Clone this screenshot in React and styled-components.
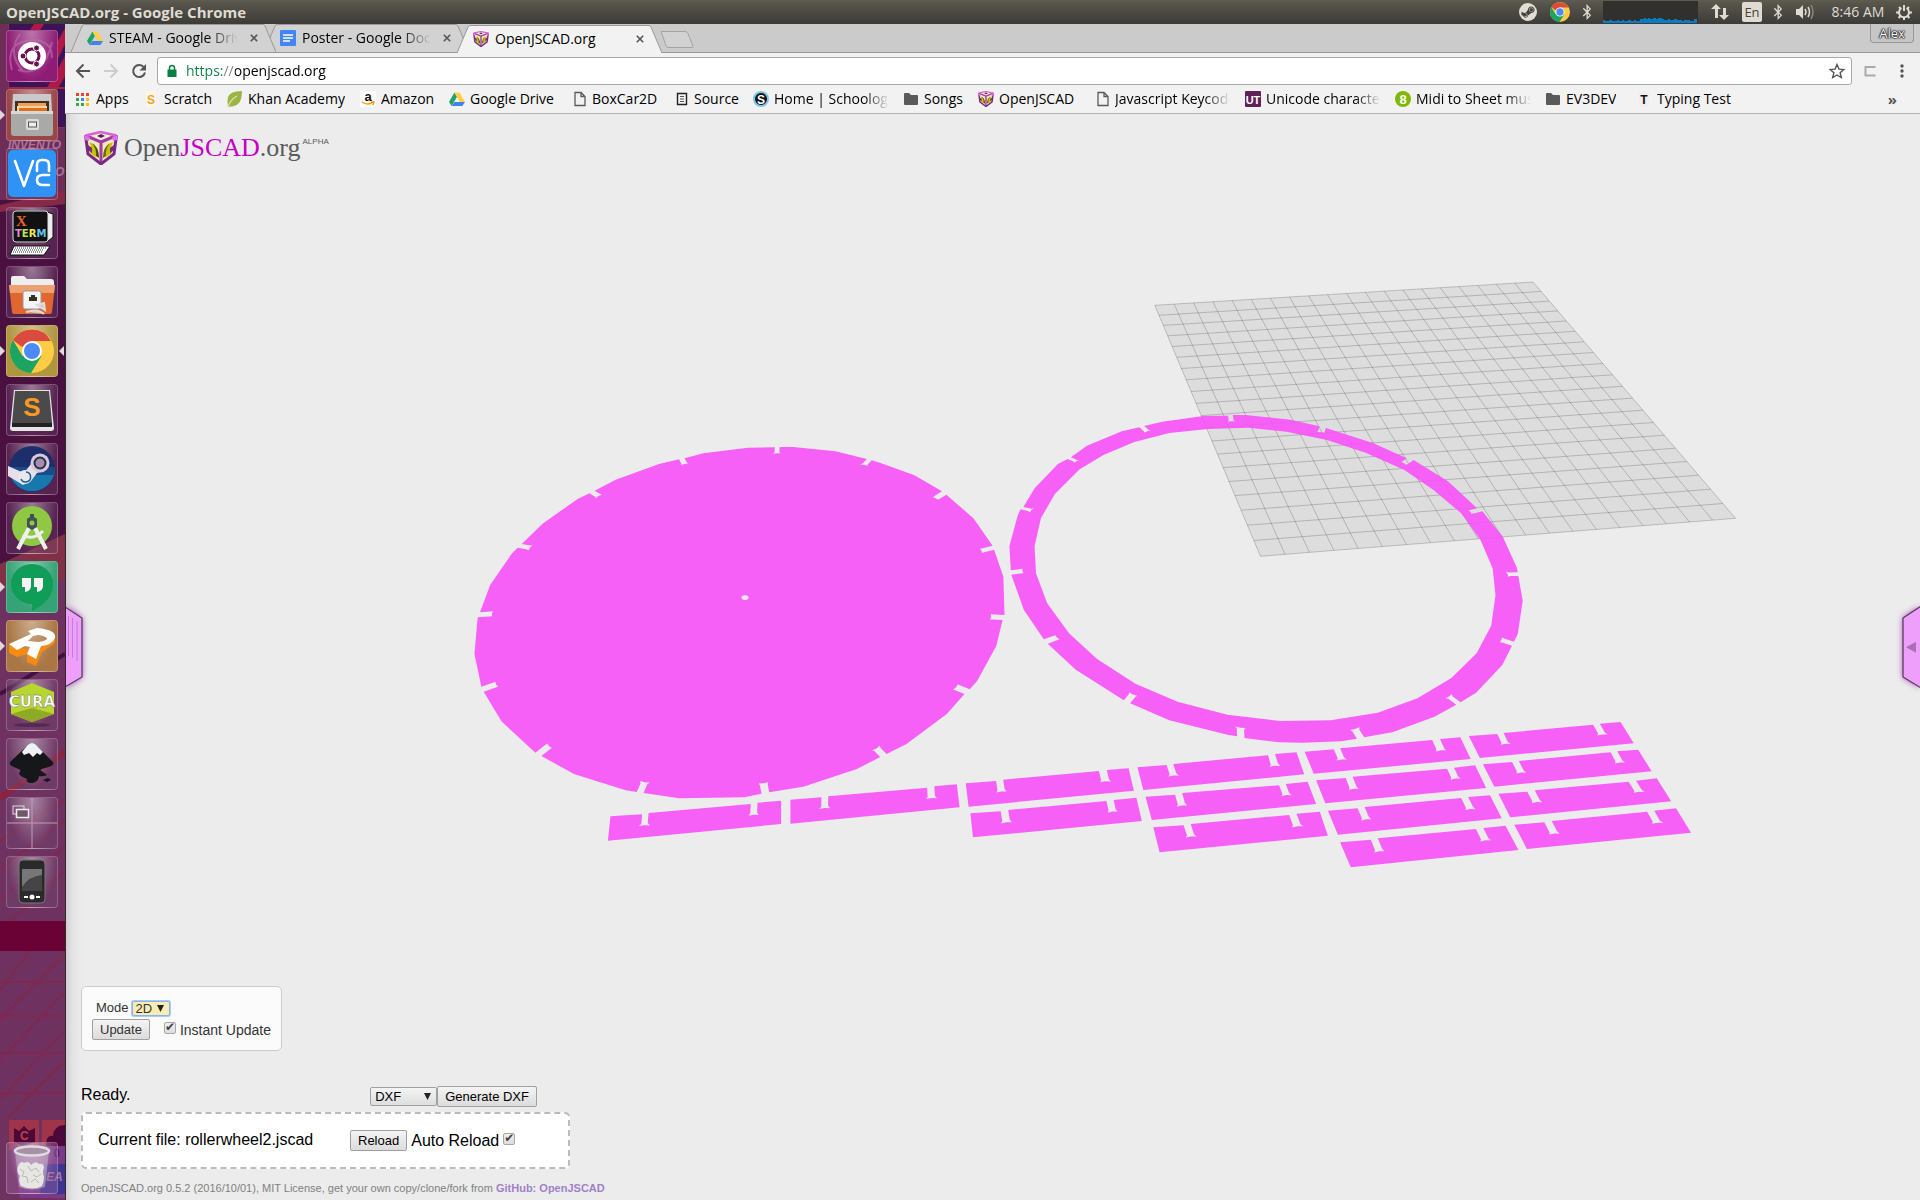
import React from "react";
import styled, { createGlobalStyle, css } from "styled-components";
import { FaBluetoothB, FaSteamSymbol } from "react-icons/fa";

const uiFont = `"Open Sans", "Noto Sans", sans-serif`;
const pageFont = `"Liberation Sans", Arial, sans-serif`;

const GlobalStyle = createGlobalStyle`
  *, *::before, *::after { box-sizing: border-box; }
  html, body, #root { height: 100%; }
  body { margin: 0; overflow: hidden; background: #ececec; font-family: ${pageFont}; }
  svg { display: block; }
  button, select, input { font: inherit; color: inherit; margin: 0; }
`;

/* ---------- Desktop frame ---------- */

const Desktop = styled.div`
  display: flex;
  flex-direction: column;
  min-height: 100vh;
`;

const MenuBar = styled.header`
  display: flex;
  align-items: center;
  justify-content: space-between;
  height: 24px;
  padding: 0 8px 0 6px;
  background: linear-gradient(#5f5c4f 0, #58554c 3px, #3c3b37 100%);
  color: #dfdbd2;
  font: 14px/24px ${uiFont};
`;

const WindowTitle = styled.h1`
  margin: 0;
  font-size: 15px;
  font-weight: 700;
  line-height: 22px;
`;

const Indicators = styled.div`
  display: flex;
  align-items: center;
  line-height: 22px;
`;

const Indicator = styled.span`
  display: flex;
  align-items: center;
  justify-content: center;
  width: ${(p) => p.$w}px;
  height: 24px;
`;

const Keyboard = styled.span`
  width: 20px;
  height: 20px;
  border-radius: 2px;
  background: #dfdbd2;
  color: #45433d;
  font-size: 13px;
  line-height: 20px;
  text-align: center;
`;

const Work = styled.div`
  display: flex;
  flex: 1;
`;

/* ---------- Launcher ---------- */

const LauncherFrame = styled.nav`
  display: grid;
  flex: none;
  width: 65px;
  background: #6e3160;
  overflow: hidden;
  > * { grid-area: 1 / 1; }
`;

const Wallpaper = styled.svg`
  width: 65px;
  height: 100%;
`;

const LauncherItems = styled.div`
  position: relative;
  display: flex;
  flex-direction: column;
  gap: 7px;
  padding: 6px;
`;

const Tile = styled.button`
  position: relative;
  display: grid;
  place-items: center;
  width: 52px;
  height: 52px;
  padding: 0;
  border: 1px solid rgba(255, 255, 255, 0.22);
  border-radius: 4px;
  background: radial-gradient(ellipse at 50% 0, rgba(255, 255, 255, 0.4), transparent 70%), ${(p) => p.$bg || "rgba(120,80,120,0.3)"};
  ${(p) => p.$last && css`margin-top: auto;`}
  ${(p) => p.$running && css`
    &::before {
      content: "";
      position: absolute;
      left: -7px;
      top: 20px;
      border: 5px solid transparent;
      border-left-color: #ded8dc;
      border-right: 0;
    }
  `}
  ${(p) => p.$focused && css`
    &::after {
      content: "";
      position: absolute;
      right: -7px;
      top: 20px;
      border: 5px solid transparent;
      border-right-color: #ded8dc;
      border-left: 0;
    }
  `}
`;

/* ---------- Browser chrome ---------- */

const Browser = styled.div`
  display: flex;
  flex: 1;
  flex-direction: column;
  min-width: 0;
  background: #f2f2f2;
`;

const TabStrip = styled.div`
  display: flex;
  align-items: flex-end;
  height: 29px;
  padding-left: 6px;
  border-bottom: 1px solid #999;
  background: #cbcbcb;
`;

const TabBox = styled.div`
  position: relative;
  z-index: ${(p) => p.$z};
  display: grid;
  grid-template-columns: minmax(0, 1fr);
  width: 205px;
  height: 28px;
  margin-right: -12px;
  margin-bottom: ${(p) => (p.$active ? "-1px" : "0")};
  > * { grid-area: 1 / 1; }
`;

const TabShape = styled.svg`
  width: 205px;
  height: 28px;
`;

const TabContent = styled.div`
  position: relative;
  display: flex;
  align-items: center;
  gap: 6px;
  padding: 0 16px;
  font: 14px/28px ${uiFont};
  color: #000;
`;

const TabTitle = styled.span`
  flex: 1;
  min-width: 0;
  overflow: hidden;
  white-space: nowrap;
  ${(p) => p.$fade && css`
    margin-right: 4px;
    mask-image: linear-gradient(90deg, #000 76%, transparent);
  `}
`;

const IconButton = styled.button`
  display: flex;
  flex: none;
  align-items: center;
  justify-content: center;
  width: ${(p) => p.$w || 20}px;
  height: 20px;
  padding: 0;
  border: 0;
  background: none;
  color: #5a5a5a;
`;

const NewTab = styled.button`
  width: 34px;
  height: 20px;
  margin: 0 0 2px 10px;
  padding: 0;
  border: 0;
  background: none;
`;

const UserBadge = styled.button`
  align-self: flex-start;
  width: 44px;
  height: 19px;
  margin: 0 6px 0 auto;
  padding: 0;
  border: 1px solid #999;
  border-top: 0;
  border-radius: 0 0 4px 4px;
  background: #c6c6c6;
  color: #fff;
  font: 13px/19px ${uiFont};
  text-shadow: 0 0 1px #000, 0 0 1px #000, 0 0 2px #222, 0 0 2px #222;
`;

const Toolbar = styled.div`
  display: flex;
  align-items: center;
  height: 34px;
  padding: 1px 8px 0 8px;
`;

const NavButtons = styled.div`
  display: flex;
  gap: 8px;
  margin-right: 8px;
`;

const AddressBox = styled.div`
  display: flex;
  flex: 1;
  align-items: center;
  height: 28px;
  margin-right: 8px;
  padding: 0 4px 0 8px;
  border: 1px solid #a9a9a9;
  border-radius: 3px;
  background: #fff;
`;

const AddressInput = styled.input`
  flex: 1;
  height: 24px;
  margin-left: 8px;
  padding: 0;
  border: 0;
  outline: 0;
  background: linear-gradient(90deg, #0b8043 36px, #808080 36px, #808080 49px, #000 49px);
  background-clip: text;
  color: transparent;
  font: 14px/24px ${uiFont};
`;

const ToolbarEnd = styled.div`
  display: flex;
  gap: 12px;
`;

const Bookmarks = styled.nav`
  display: flex;
  align-items: center;
  height: 27px;
  padding: 0 23px 2px 10px;
  border-bottom: 1px solid #b4b4b4;
`;

const Bookmark = styled.a`
  display: flex;
  flex: none;
  align-items: center;
  gap: 5px;
  width: ${(p) => p.$w}px;
  color: #000;
  font: 14px/20px ${uiFont};
  text-decoration: none;
  white-space: nowrap;
  svg { flex: none; }
`;

const BookmarkLabel = styled.span`
  overflow: hidden;
  ${(p) => p.$fade && css`
    width: 115px;
    mask-image: linear-gradient(90deg, #000 78%, transparent);
  `}
`;

const Overflow = styled.button`
  margin-left: auto;
  padding: 0;
  border: 0;
  background: none;
  color: #555;
  font: 700 15px/20px ${uiFont};
`;

/* ---------- Page ---------- */

const Page = styled.main`
  display: grid;
  flex: 1;
  border-left: 1px solid #2d2b2c;
  background: linear-gradient(90deg, #cfcfcf 0, #e2e2e2 6px, #ececec 16px);
  > * { grid-area: 1 / 1; min-width: 0; }
`;

const Viewer = styled.svg`
  width: 100%;
  height: 100%;
`;

const Overlay = styled.div`
  position: relative;
  display: flex;
  flex-direction: column;
  align-items: flex-start;
  padding: 17px 16px 4px 15px;
  color: #000;
`;

const Brand = styled.a`
  display: flex;
  align-items: center;
  gap: 6px;
  margin-left: 3px;
  color: #5a5a5a;
  font: 26px/34px "Liberation Serif", "Times New Roman", serif;
  text-decoration: none;
  em { color: #c400c4; font-style: normal; }
  sup { align-self: flex-start; font: 8px/12px ${pageFont}; margin-left: -4px; padding-top: 5px; }
`;

const Parameters = styled.form`
  display: flex;
  flex-direction: column;
  gap: 3px;
  width: 201px;
  height: 65px;
  margin-top: auto;
  padding: 13px 8px 0 10px;
  border: 1px solid #ccc;
  border-radius: 5px;
  background: #fbfbfb;
  color: #333;
  white-space: nowrap;
`;

const Row = styled.div`
  display: flex;
  align-items: center;
`;

const ModeRow = styled(Row)`
  gap: 3px;
  padding-left: 4px;
  font-size: 13px;
  line-height: 16px;
`;

const SelectBox = styled.span`
  display: grid;
  align-items: center;
  > * { grid-area: 1 / 1; }
  svg { justify-self: end; margin-right: 6px; pointer-events: none; }
`;

const Select = styled.select`
  appearance: none;
  padding: 0 0 0 4px;
  border: 1px solid #a0a0a0;
  border-radius: 2px;
  outline: 0;
  font-size: 13px;
  ${(p) => p.$focused
    ? css`width: 38px; height: 15px; padding-left: 3px; line-height: 13px; background: #faecb4; border-color: #8ab4e8; box-shadow: 0 0 0 1px #a8ccf8;`
    : css`width: 67px; height: 19px; line-height: 17px; background: linear-gradient(#f4f4f4, #dedede);`}
`;

const PushButton = styled.button`
  height: 21px;
  padding: 0 7px;
  border: 1px solid #a0a0a0;
  border-radius: 2px;
  background: linear-gradient(#f4f4f4, #dcdcdc);
  font-size: 13px;
  line-height: 19px;
`;

const Check = styled.input`
  appearance: none;
  display: inline-block;
  flex: none;
  width: 12px;
  height: 12px;
  border: 1px solid #a8a8a8;
  border-radius: 2px;
  background: linear-gradient(#eee, #ddd);
  &:checked::before {
    content: "✔";
    display: block;
    color: #444;
    font: 12px/9px "DejaVu Sans", sans-serif;
  }
`;

const CheckLabel = styled.label`
  display: flex;
  align-items: center;
  gap: 4px;
  margin-left: ${(p) => p.$ml}px;
  font-size: ${(p) => p.$size}px;
  line-height: 20px;
  ${Check} { margin-bottom: 4px; }
`;

const StatusRow = styled(Row)`
  width: 456px;
  height: 21px;
  margin-top: 35px;
  font-size: 16px;
`;

const Status = styled.span`
  flex: 1;
  margin-bottom: 4px;
`;

const FileBox = styled.section`
  display: flex;
  align-items: center;
  width: 489px;
  height: 57px;
  margin-top: 5px;
  padding: 0 15px;
  border: 2px dashed #bbb;
  border-radius: 5px;
  background: #fff;
  font-size: 16px;
`;

const FileName = styled.span`
  width: 252px;
  margin-bottom: 2px;
`;

const Footer = styled.footer`
  margin-top: 11px;
  color: #808080;
  font-size: 11px;
  line-height: 16px;
  a { color: #a080c8; font-weight: 700; text-decoration: none; }
`;

/* ---------- Small drawings ---------- */

const DriveIcon = () => (
  <svg width="16" height="16" viewBox="0 0 16 16">
    <path d="M5.4 1.5 0 11l2.6 4L8 5.8z" fill="#1fa463" />
    <path d="M5.4 1.5h5.2L16 11h-5.3z" fill="#ffcf48" />
    <path d="M5.4 11H16l-2.7 4H2.6z" fill="#3f83f1" />
  </svg>
);

const DocsIcon = () => (
  <svg width="16" height="16" viewBox="0 0 16 16">
    <rect width="16" height="16" rx="1" fill="#4285f4" />
    <path d="M3 5h10M3 8h10M3 11h7" stroke="#fff" strokeWidth="1.4" />
  </svg>
);

const Cube = ({ size = 16 }) => (
  <svg width={size} height={size} viewBox="0 0 34 34">
    <path d="M1 4 16 0l17 4-2 20-14 10L3 24z" fill="#efe9c0" />
    <path d="M8 5 17 2l9 3-9 4z" fill="#f6f2d8" />
    <path d="M13 5l4-2 4 2-4 2z" fill="#5a2060" />
    <path d="M5 11q9 3 9 12l-2 3-6-4q3-5-1-11z" fill="#c6c400" />
    <path d="M8 12q7 4 7 15l-3-2q1-7-4-13z" fill="#4e4c08" />
    <path d="M29 11q-9 3-9 12l2 3 6-4q-2-5 1-11z" fill="#c6c400" />
    <path d="M26 12q-7 4-7 15l3-2q-1-7 4-13z" fill="#6a6810" />
    <path d="M4 14l4 3v5l-4-3zM30 14l-4 3v5l4-3z" fill="#7a2a80" />
    <path d="M1.500 4.500 17 11v22M32.500 4.500 17 11" stroke="#a23aa8" strokeWidth="3" fill="none" />
    <path d="M1.500 4 4 23l13 10 13-10 2.500-19" stroke="#7a2a84" strokeWidth="3" fill="none" />
    <path d="M1.500 4.500 16.500 1l16 3.500" stroke="#d860d8" strokeWidth="2.500" fill="none" />
    <path d="M0 4l6 2-1 4-4-1zM34 4l-6 2 1 4 4-1z" fill="#e070e4" />
  </svg>
);

const PageIcon = () => (
  <svg width="14" height="16" viewBox="0 0 14 16" fill="none" stroke="#5a5a5a" strokeWidth="1.3">
    <path d="M2 1.500h6l4 4v9H2zM8 1.500v4h4" />
  </svg>
);

const FolderIcon = () => (
  <svg width="16" height="16" viewBox="0 0 16 16">
    <path d="M1 3q0-1 1-1h4l2 2h6q1 0 1 1v8q0 1-1 1H2q-1 0-1-1z" fill="#5a5a5a" />
  </svg>
);

const AppsIcon = () => (
  <svg width="16" height="16" viewBox="0 0 16 16">
    {["#ea4335", "#ea4335", "#ea4335", "#34a853", "#4285f4", "#fbbc05", "#34a853", "#34a853", "#fbbc05"].map((c, i) => (
      <rect key={i} x={1 + (i % 3) * 5} y={2 + Math.floor(i / 3) * 5} width="3" height="3" fill={c} />
    ))}
  </svg>
);

const LetterIcon = ({ letter, bg, fg, round, size = 13, ring, width = 16 }) => (
  <svg width="16" height="16" viewBox="0 0 16 16">
    {round ? <circle cx="8" cy="8" r={ring ? 7 : 8} fill={bg} stroke={ring} strokeWidth="2" /> : <rect x={(16 - width) / 2} width={width} height="16" rx="1" fill={bg} />}
    <text x="8" y="12.500" textAnchor="middle" fontFamily="Liberation Sans, sans-serif" fontWeight="700" fontSize={size} fill={fg}>{letter}</text>
  </svg>
);

const LeafIcon = () => (
  <svg width="17" height="16" viewBox="0 0 17 16">
    <path d="M16 0Q4 0 2 6q-1 4 0 10Q14 15 15 8q1-4 1-8z" fill="#9cb443" />
    <path d="M2 16Q4 9 11 5" stroke="#dfe8b8" strokeWidth="1.200" fill="none" />
  </svg>
);

const AmazonIcon = () => (
  <svg width="16" height="16" viewBox="0 0 16 16">
    <rect width="16" height="16" rx="2" fill="#fff" />
    <text x="8" y="9.500" textAnchor="middle" fontFamily="Liberation Sans, sans-serif" fontWeight="700" fontSize="13" fill="#111">a</text>
    <path d="M2 11q6 4 11 0M11 11h3l-1 3" stroke="#f90" strokeWidth="1.500" fill="none" />
  </svg>
);

const SourceIcon = () => (
  <svg width="14" height="16" viewBox="0 0 14 16" fill="none" stroke="#222">
    <path d="M2.500 2.500h9v11h-9z" strokeWidth="1.400" />
    <path d="M5 5.500h4M5 8h4M5 10.500h4" stroke="#555" />
  </svg>
);

const ChromeLogo = ({ size }) => (
  <svg width={size} height={size} viewBox="0 0 44 44">
    <circle cx="22" cy="22" r="22" fill="#fc4" />
    <path d="M2.900 11A22 22 0 0 0 21 44l10.500-17L22 22l-9.500 5z" fill="#1da462" />
    <path d="M12 18 2.900 11A22 22 0 0 1 41 12H22z" fill="#db4a3e" />
    <circle cx="22" cy="22" r="10" fill="#fff" />
    <circle cx="22" cy="22" r="8" fill="#4c8bf5" />
  </svg>
);

const DownTriangle = () => (
  <svg width="7" height="7" viewBox="0 0 7 7"><path d="M0 0h7L3.500 7z" fill="#222" /></svg>
);

const CloseIcon = () => (
  <svg width="8" height="8" viewBox="0 0 8 8"><path d="M.8.8l6.400 6.400M7.200.8.8 7.200" stroke="#555" strokeWidth="1.600" /></svg>
);

const CpuGraph = () => (
  <svg width="95" height="24" viewBox="0 0 95 24">
    <rect y="1" width="95" height="22" fill="#31302c" />
    <path d="M0 23v-3h2v1h4v-1h3v1h5v-1h2v1h3v-1h2v1h4v-1h3v1h3v-1h2v1h4v-2h4v-1h2v1h2v-1h2v1h3v-1h3v1h2v-1h4v1h2v1h4v-1h2v1h4v-1h3v1h5v1h2v-1h6v1h4v-2h3v4z" fill="#0a7cc4" />
  </svg>
);

/* ---------- Launcher drawings ---------- */

const Art = ({ children }) => <svg width="50" height="50" viewBox="1 1 50 50">{children}</svg>;

const launcherItems = [
  { name: "Dash", bg: "#8e1c75", art: (
    <Art>
      <path d="M6 40Q-2 12 26 10q20 0 20 18M46 12q-8 36-34 28M14 4q-14 20 4 38" stroke="#c070b0" strokeWidth="2" fill="none" opacity=".6" />
      <circle cx="26" cy="26" r="14" fill="#fff" />
      <circle cx="26" cy="26" r="7" fill="none" stroke="#6a1050" strokeWidth="3" />
      {[[17, 26], [30.5, 18], [30.5, 34]].map(([x, y]) => <circle key={x + y} cx={x} cy={y} r="3" fill="#6a1050" stroke="#fff" />)}
    </Art>
  ) },
  { name: "Files", running: true, bg: "#9a4547", art: (
    <Art>
      <path d="M7 5h38l1 17H6z" fill="#c9c9c9" /><path d="M9 12h34v11H9z" fill="#403028" />
      <path d="M12 14h28v9H12z" fill="#f0a050" /><path d="M11 17h30v6H11z" fill="#f8d8a0" /><path d="M13 19h28v4H13z" fill="#e07020" />
      <path d="M5 22h42v22q0 3-3 3H8q-3 0-3-3z" fill="#a9a9a7" />
      <path d="M5 22h42v3H5z" fill="#d8d8d6" />
      <rect x="20" y="30" width="13" height="11" rx="2" fill="#ddd" /><rect x="22.500" y="33" width="8" height="5" fill="#eee" stroke="#555" />
    </Art>
  ) },
  { name: "VNC Viewer", art: (
    <Art>
      <rect x="2" y="2" width="48" height="47" rx="5" fill="#2e93f4" />
      <g fill="none" stroke="#fff" strokeWidth="2.600" strokeLinecap="round" strokeLinejoin="round">
        <path d="M9 13l9 25 9-25" />
        <path d="M31 23v-6q0-5 5-5h2q5 0 5 5v6" />
        <path d="M43 27h-6q-6 0-6 5t6 5h6" />
      </g>
    </Art>
  ) },
  { name: "XTerm", art: (
    <Art>
      <path d="M8 4h30l9 3v23l-6 5H8z" fill="#eee" stroke="#111" /><rect x="7" y="4" width="35" height="31" rx="3" fill="#111" stroke="#ddd" />
      <g fontFamily="DejaVu Sans, sans-serif" fontWeight="700">
        <text x="10" y="19" fontSize="15" fontFamily="Liberation Serif, serif" fill="#e8632a">X</text>
        <text x="9" y="30" fontSize="10"><tspan fill="#e38bd0">T</tspan><tspan fill="#b5e35a">E</tspan><tspan fill="#f0ec50">R</tspan><tspan fill="#5bc8f0">M</tspan></text>
      </g>
      <path d="M8 39h36l-6 9H4z" fill="#fff" stroke="#111" /><path d="M9 41h31M8 43h30M7 45h29" stroke="#333" strokeDasharray="1 1" />
    </Art>
  ) },
  { name: "Network share", art: (
    <Art>
      <path d="M5 12q0-2 2-2h11l3 3h24q3 0 3 3v6H5z" fill="#eee" /><path d="M3 19h46l-3 27q0 2-2 2H8q-2 0-2-2z" fill="#e0672f" />
      <path d="M3 19h46l-1 8H4z" fill="#efa070" /><rect x="17" y="25" width="18" height="18" rx="2" fill="#f4f4f4" stroke="#999" />
      <path d="M23 35v-4h2v-2h4v2h2v4z" fill="#332" /><path d="M20 46q12-4 18 2M31 39l7-2 1 7z" stroke="#ddd" strokeWidth="2" fill="#ccc" />
    </Art>
  ) },
  { name: "Chrome", running: true, focused: true, bg: "#b0963f", art: <ChromeLogo size={44} /> },
  { name: "Sublime Text", art: (
    <Art>
      <path d="M8 6h36l4 38q0 3-3 3H7q-3 0-3-3z" fill="#e4e4e4" /><path d="M9 7h34l3 32H6z" fill="#4a4a4a" /><path d="M6 39h40v4H6z" fill="#222" />
      <text x="26" y="32" textAnchor="middle" fontSize="26" fontWeight="700" fontFamily="Liberation Sans, sans-serif" fill="#f89820">S</text>
    </Art>
  ) },
  { name: "Steam", art: (
    <Art>
      <circle cx="26" cy="26" r="23" fill="#1c2f6c" /><path d="M4 32a23 23 0 0 0 44 0z" fill="#1678ac" /><path d="M3 24h46v8H4z" fill="#174c88" />
      <path d="M2 23l16 7 7-9 3-8 12 14-9 3-6 8-8 4-15-9z" fill="#e8dfea" />
      <circle cx="34" cy="20" r="9.500" fill="#dcc8dc" /><circle cx="34" cy="20" r="5.500" fill="#a88cb0" stroke="#234" strokeWidth="2" />
      <circle cx="19" cy="34" r="7" fill="#e8e8ec" /><path d="M20 29a5 5 0 1 1-5 7" fill="none" stroke="#24578c" strokeWidth="1.500" />
    </Art>
  ) },
  { name: "Android Studio", art: (
    <Art>
      <circle cx="26" cy="24" r="20" fill="#8fc843" />
      <path d="M24 24 12 47M28 24l12 23" stroke="#f0f0f0" strokeWidth="4" /><path d="M17 33q10 6 20-4" stroke="#f0f0f0" strokeWidth="3" fill="none" />
      <path d="M21 17l3-2v-3h4v3l3 2v8l-5 3-5-3z" fill="#455056" /><circle cx="26" cy="21" r="2.500" fill="#8fc843" />
    </Art>
  ) },
  { name: "Hangouts", running: true, bg: "#35a277", art: (
    <Art>
      <path d="M26 3a21 20 0 0 1 21 20q0 17-21 27v-7A21 20 0 0 1 26 3z" fill="#0f9d58" />
      <path d="M16 17h9v8q0 5-6 6v-5h-3zM28 17h9v8q0 5-6 6v-5h-3z" fill="#f4f4f4" />
    </Art>
  ) },
  { name: "Recorder", running: true, bg: "#a97644", art: (
    <Art>
      <path d="M3 24v9l8 4 10-3v8l9 4 6-14 13-9v-8L25 30z" fill="#f58a14" />
      <path fillRule="evenodd" d="M3 24l22-10-3-3 9-3q20 2 18 10-3 7-14 8l-5 13-9-5 3-7-5-1-8 4zM27 16l-5 5 10 1q9-1 9-4-4-3-9-3z" fill="#fff" />
    </Art>
  ) },
  { name: "Cura", art: (
    <Art>
      <path d="M5 13 26 4l22 9v22l-22 8-21-8z" fill="#b7d62f" /><path d="M5 35l21-6 22 6-22 8z" fill="#8fab26" />
      <text x="26" y="28" textAnchor="middle" fontSize="15" fontWeight="700" fontFamily="DejaVu Sans, sans-serif" fill="#fff" stroke="#666" strokeWidth=".4">CURA</text>
      <ellipse cx="26" cy="46" rx="18" ry="2" fill="#402040" opacity=".6" />
    </Art>
  ) },
  { name: "Inkscape", art: (
    <Art>
      <path d="M26 5q3 0 6 4l15 15q2 4-8 6-8 2-2 4l4 3q-4 2-8 1 0 5-6 7-8 0-6-4-8-3-8-6 4-3-3-5-9-3-5-7L20 9q3-4 6-4z" fill="#15171a" />
      <path d="M26 5q3 0 6 4l5 5-3 3-3-2-4 4-4-4-5 2-2-3 4-5q3-4 6-4z" fill="#eef2f6" /><path d="M37 42l5-2 3 2-4 2z" fill="#15171a" />
    </Art>
  ) },
  { name: "Workspaces", art: (
    <Art>
      <path d="M26 1v50M1 26h50" stroke="#c79ab8" /><rect x="7" y="9" width="11" height="8" fill="none" stroke="#ddd" />
      <rect x="10.500" y="12.500" width="12" height="8" fill="#705868" stroke="#eee" strokeWidth="1.500" />
    </Art>
  ) },
  { name: "Phone", art: (
    <Art>
      <rect x="13" y="4" width="26" height="43" rx="4" fill="#2a2a2a" stroke="#777" /><path d="M16 13h20v22H16z" fill="#454545" /><path d="M16 13h20v6q-13 1-20 12z" fill="#777" />
      <path d="M18 41h4M30 41h4" stroke="#fff" strokeWidth="2" /><circle cx="26" cy="41" r="2.500" fill="#fff" />
    </Art>
  ) },
  { name: "Trash", last: true, bg: "rgba(170,110,170,.35)", art: (
    <Art>
      <path d="M9 9l4 36q13 5 26 0l4-36z" fill="#cfc4cf" opacity=".5" />
      <path d="M12 24q3-6 6-3 5-3 7 2 5-5 8-1 5-1 5 4-2 4 0 9 0 5-2 9-9 5-21 0-3-5-1-10-4-4-2-10z" fill="#e6e6e2" />
      <path d="M14 27l4 3-2 4 5 1 1 6M22 24l3 5 5-3 3 4M27 33l4 2 4-3M25 40l4-3 4 4" stroke="#b8b8b4" fill="none" />
      <ellipse cx="26" cy="9" rx="17" ry="4.500" fill="#a890a8" stroke="#ddd" strokeWidth="2.500" />
    </Art>
  ) },
];

const LauncherWallpaper = () => (
  <Wallpaper viewBox="0 24 65 1176" preserveAspectRatio="none">
    <rect y="24" width="65" height="1176" fill="#6e3160" />
    <path d="M0 24h65v540L0 620z" fill="#4a1040" />
    <path d="M8 24h57v104H8z" fill="#3c1358" />
    <path d="M36 128 65 76v-20L24 128zM46 84 65 44v-16L44 66zM10 60 34 24h10L10 76z" fill="#b01848" />
    <path d="M0 88h65M8 24v104h57" stroke="#9a2848" strokeWidth="2" fill="none" />
    <path d="M0 24h8v170H0zM0 128h65v72H0z" fill="#6e2c58" />
    <path d="M0 205l65-15v14L0 212z" fill="#862848" />
    <path d="M0 564 65 534v50L0 590z" fill="#823048" />
    <path d="M0 590 65 580v620H0z" fill="#6e3160" />
    <path d="M0 694 65 654" stroke="#401040" strokeWidth="4" />
    <path d="M0 798 65 752" stroke="#8c2440" strokeWidth="6" />
    <path d="M0 921h65v30H0z" fill="#6b0235" />
    <path d="M0 982h65M0 1016h65M0 1053h65M0 1093h65M0 840l65-40M0 870l65-50M0 900l65-54M10 921l55-50M0 990l30-39M0 1020l65-66M0 1060l65-68M0 1100l65-70M6 1120l59-60" stroke="#86264a" strokeWidth="1.500" />
    <path d="M9 1120h30v30H9zM42 1120h23v30H42z" fill="#a03448" />
    <path d="M14 1128l5 3 5-5 5 5 6-3v14l-11 4-10-4zM46 1146q0-12 7-10 0-6 6-10l6-1v22z" fill="#4c0838" />
    <path d="M12 1146h53v52H20z" fill="#7a3a88" />
    <path d="M44 1164h21v30H40z" fill="#3c3490" />
    <g fontFamily="Liberation Sans, sans-serif" fontStyle="italic" fontWeight="700" fill="#a8749c">
      <text x="8" y="149" fontSize="12">INVENTO</text>
      <text x="55" y="176" fontSize="12">O</text>
      <text x="46" y="1181" fontSize="12">EA</text>
    </g>
    <text x="54" y="1157" fontSize="10" fill="#301040" fontFamily="Liberation Sans, sans-serif">0</text>
    <text x="20" y="1140" fontSize="12" fontWeight="700" fill="#c04048" fontFamily="Liberation Sans, sans-serif">C</text>
  </Wallpaper>
);

/* ---------- Scene ---------- */

const MAGENTA = "#f760f7";

// Each part is traced in its own sheet; a sheet has an origin and a pair of scale factors.
const project = ([ox, oy, sx], [x, y]) => [ox + x / sx, oy + y / 3];
const fmt = ([x, y]) => `${x.toFixed(1)} ${y.toFixed(1)}`;

// A slot entry (8 numbers) has a straight neck and flared inner corners.
const slot = ([ax, ay, bx, by, cx, cy, dx, dy]) => {
  const vx = (bx + cx - ax - dx) / 2;
  const vy = (by + cy - ay - dy) / 2;
  const k = 0.8;
  const out = 0.05;
  const ex = (cx - bx) * out, ey = (cy - by) * out;
  return [
    [ax, ay], [ax + vx * k, ay + vy * k], [bx - ex, by - ey],
    [(bx + cx) / 2 - vx * 0.05, (by + cy) / 2 - vy * 0.05],
    [cx + ex, cy + ey], [dx + vx * k, dy + vy * k], [dx, dy],
  ];
};

const outline = (sheet, parts) =>
  "M" + parts.flatMap((p) => (p.length === 8 ? slot(p) : [p])).map((p) => fmt(project(sheet, p))).join("L") + "Z";

const discSheet = [450, 420, 2.7034];
const disc = [
  [928, 81], [1042, 94], [1127, 117, 1109, 134, 1129, 137, 1140, 121], [1166, 130], [1254, 165],
  [1330, 214, 1306, 233, 1318, 238, 1342, 224], [1415, 295], [1467, 377, 1433, 387, 1438, 398, 1471, 389],
  [1496, 470], [1499, 585, 1462, 583, 1460, 598, 1494, 600], [1477, 678], [1425, 783],
  [1405, 808, 1372, 794, 1361, 808, 1391, 822], [1343, 882], [1234, 972], [1180, 1002, 1161, 978, 1142, 990, 1163, 1011],
  [1100, 1047], [955, 1100], [863, 1117, 859, 1087, 836, 1090, 842, 1121], [795, 1132], [710, 1133], [620, 1135],
  [523, 1119, 539, 1087, 515, 1083, 505, 1116], [475, 1111], [335, 1062], [247, 1008, 275, 983, 263, 971, 231, 998],
  [140, 905], [91, 815, 130, 799, 123, 787, 85, 800], [66, 702], [75, 592, 114, 588, 116, 574, 81, 577],
  [109, 494], [168, 400], [183, 383, 213, 390, 222, 377, 194, 372], [250, 311], [345, 237],
  [377, 220, 395, 234, 410, 224, 391, 212], [448, 179], [565, 132], [619, 118, 625, 135, 644, 130, 634, 115],
  [685, 100], [805, 83], [878, 82, 874, 101, 893, 100, 891, 81],
];

const ringSheet = [990, 270, 2.0632];
const ringOuter = [
  [527, 435], [620, 449], [680, 469, 676, 486, 690, 489, 693, 474], [790, 519], [860, 565, 850, 577, 858, 584, 874, 570],
  [945, 634], [1005, 715, 988, 722, 993, 731, 1016, 724], [1058, 800], [1087, 893], [1089, 907, 1065, 906, 1069, 920, 1090, 918],
  [1099, 992], [1089, 1092], [1081, 1115, 1056, 1103, 1052, 1115, 1077, 1127], [1057, 1185], [1003, 1268],
  [971, 1297, 952, 1273, 940, 1284, 962, 1304], [917, 1340], [830, 1387], [772, 1402, 761, 1372, 744, 1380, 757, 1406],
  [725, 1414], [645, 1418], [597, 1417], [525, 1404, 526, 1374, 507, 1370, 510, 1399], [492, 1395], [370, 1351],
  [289, 1300, 303, 1277, 288, 1268, 276, 1291], [177, 1199], [119, 1121, 143, 1107, 135, 1096, 111, 1108], [70, 1020],
  [44, 914, 69, 909, 67, 897, 43, 901], [40, 829], [57, 737], [63, 718, 82, 727, 90, 715, 69, 711], [92, 655], [140, 582],
  [160, 567, 174, 578, 184, 570, 167, 562], [200, 527], [272, 484], [308, 472, 319, 487, 331, 482, 318, 468],
  [355, 455], [440, 438], [491, 437, 491, 455, 505, 454, 501, 435],
];
const ringInner = [
  [450, 477], [533, 473], [612, 485], [695, 510], [775, 548], [855, 600], [915, 660], [972, 730], [1012, 810], [1037, 895],
  [1043, 975], [1034, 1067], [1004, 1150], [952, 1224], [882, 1285], [800, 1328], [703, 1351], [597, 1353], [490, 1334],
  [387, 1295], [300, 1241], [221, 1167], [163, 1090], [118, 1000], [95, 910], [92, 828], [105, 745], [134, 672],
  [185, 598], [235, 554], [298, 516], [370, 489],
];

const nearSheet = [590, 700, 2.8];
const nearBars = [
  [[57, 349], [146, 343, 138, 378, 166, 377, 164, 339], [450, 312, 445, 347, 471, 345, 469, 308], [535, 302], [535, 372], [50, 422]],
  [[561, 299], [648, 292, 643, 327, 671, 325, 667, 289], [944, 263, 942, 297, 970, 295, 964, 259], [1027, 253], [1035, 322], [561, 371]],
  [[1052, 250], [1137, 243, 1139, 277, 1165, 275, 1157, 239], [1425, 213, 1430, 246, 1457, 245, 1447, 210], [1508, 205], [1523, 272], [1060, 320]],
  [[1065, 340], [1150, 334, 1152, 370, 1180, 367, 1171, 330], [1446, 303, 1451, 338, 1476, 335, 1466, 300], [1530, 293], [1545, 363], [1072, 412]],
];

const farSheet = [1130, 700, 2.7034];
const farBars = [
  [[20, 202], [99, 195, 105, 229, 131, 227, 117, 192], [373, 166, 379, 200, 405, 198, 392, 162], [450, 157], [471, 223], [36, 270]],
  [[472, 155], [551, 148, 560, 181, 585, 179, 568, 145], [817, 120, 829, 154, 853, 151, 838, 117], [893, 112], [921, 177], [497, 221]],
  [[916, 108], [993, 102, 1003, 134, 1028, 132, 1010, 99], [1252, 74, 1265, 106, 1290, 104, 1270, 71], [1326, 66], [1362, 130], [946, 174]],
  [[42, 290], [122, 284, 128, 319, 153, 317, 141, 279], [403, 256, 411, 288, 436, 286, 421, 252], [480, 245], [503, 312], [59, 360]],
  [[503, 241], [583, 234, 593, 269, 617, 267, 602, 230], [857, 206, 868, 239, 893, 236, 876, 203], [933, 196], [963, 264], [528, 310]],
  [[954, 193], [1033, 186, 1046, 220, 1070, 218, 1051, 183], [1299, 157, 1313, 190, 1337, 188, 1317, 154], [1374, 149], [1410, 214], [985, 260]],
  [[63, 382], [145, 376, 152, 412, 179, 410, 164, 372], [430, 345, 440, 382, 466, 379, 450, 341], [513, 335], [535, 407], [80, 457]],
  [[535, 332], [615, 325, 627, 361, 651, 358, 634, 321], [895, 294, 909, 330, 933, 328, 914, 291], [973, 286], [1005, 355], [562, 404]],
  [[996, 281], [1074, 275, 1088, 309, 1113, 307, 1094, 271], [1348, 245, 1364, 278, 1389, 276, 1368, 242], [1424, 235], [1463, 304], [1028, 352]],
  [[568, 427], [651, 419, 662, 457, 687, 454, 670, 415], [935, 387, 949, 424, 975, 421, 955, 384], [1015, 377], [1050, 450], [597, 502]],
  [[1039, 374], [1120, 367, 1135, 403, 1160, 401, 1140, 363], [1398, 335, 1413, 371, 1440, 369, 1417, 332], [1476, 325], [1517, 398], [1073, 447]],
];

// Perspective mapping of the unit square onto the ground plate.
const plate = [[1154.8, 305.3], [1533, 282], [1735.5, 518.3], [1260.5, 556.3]];
const onPlate = (() => {
  const [[x0, y0], [x1, y1], [x2, y2], [x3, y3]] = plate;
  const dx1 = x1 - x2, dx2 = x3 - x2, dx3 = x0 - x1 + x2 - x3;
  const dy1 = y1 - y2, dy2 = y3 - y2, dy3 = y0 - y1 + y2 - y3;
  const det = dx1 * dy2 - dx2 * dy1;
  const g = (dx3 * dy2 - dx2 * dy3) / det;
  const h = (dx1 * dy3 - dx3 * dy1) / det;
  return (u, v) => {
    const w = g * u + h * v + 1;
    return [
      ((x1 - x0 + g * x1) * u + (x3 - x0 + h * x3) * v + x0) / w,
      ((y1 - y0 + g * y1) * u + (y3 - y0 + h * y3) * v + y0) / w,
    ];
  };
})();

const gridLines = (n) => Array.from({ length: n + 1 }, (_, i) => {
  const t = i / n;
  return `M${fmt(onPlate(t, 0))}L${fmt(onPlate(t, 1))}M${fmt(onPlate(0, t))}L${fmt(onPlate(1, t))}`;
}).join("");

const Scene = () => (
  <Viewer viewBox="66 114 1854 1086" preserveAspectRatio="xMidYMid meet" aria-label="Model view">
    <defs>
      <filter id="glow" x="-50%" y="-20%" width="200%" height="140%"><feGaussianBlur stdDeviation="3" /></filter>
    </defs>
    <path d={"M" + plate.map(fmt).join("L") + "Z"} fill="#dddddd" />
    <path d={gridLines(20)} stroke="#000" strokeOpacity=".16" strokeWidth="1" fill="none" />
    <path d={outline(discSheet, disc)} fill={MAGENTA} />
    <ellipse cx="745" cy="597.6" rx="3.500" ry="2.300" fill="#ececec" />
    <path d={outline(ringSheet, ringOuter) + outline(ringSheet, ringInner)} fill={MAGENTA} fillRule="evenodd" />
    {nearBars.map((b, i) => <path key={i} d={outline(nearSheet, b)} fill={MAGENTA} />)}
    {farBars.map((b, i) => <path key={i} d={outline(farSheet, b)} fill={MAGENTA} />)}
    <path d={gridLines(20)} stroke="#000" strokeOpacity=".03" strokeWidth="1" fill="none" />
    <path d="M66 607l16 11v59l-16 10z" fill="#a030b0" filter="url(#glow)" />
    <path d="M65 607l17 11v59l-17 10z" fill="#ee9ffb" stroke="#503858" strokeWidth="1.200" />
    <path d="M68.500 616v40M72.500 618v40M77 621v40" stroke="#c07fd0" />
    <path d="M1920 607l-17 11v59l17 10z" fill="#a030b0" filter="url(#glow)" />
    <path d="M1921 606l-18 12v59l18 11z" fill="#ee9ffb" stroke="#503858" strokeWidth="1.200" />
    <path d="M1906 647.300l10-5.500v11z" fill="#aa70b4" />
  </Viewer>
);

/* ---------- Data ---------- */

const tabs = [
  { title: "STEAM - Google Drive", icon: <DriveIcon />, fade: true, z: 2 },
  { title: "Poster - Google Docs", icon: <DocsIcon />, fade: true, z: 1 },
  { title: "OpenJSCAD.org", icon: <Cube />, active: true, z: 3 },
];

const bookmarks = [
  ["Apps", <AppsIcon />, 68],
  ["Scratch", <LetterIcon letter="S" bg="#fff6e8" fg="#f5a030" size={12} width={10} />, 83],
  ["Khan Academy", <LeafIcon />, 134],
  ["Amazon", <AmazonIcon />, 89],
  ["Google Drive", <DriveIcon />, 124],
  ["BoxCar2D", <PageIcon />, 102],
  ["Source", <SourceIcon />, 78],
  ["Home | Schoology", <LetterIcon letter="S" bg="#111" fg="#fff" round ring="#7cc8e8" size={12} />, 150, true],
  ["Songs", <FolderIcon />, 75],
  ["OpenJSCAD", <Cube />, 118],
  ["Javascript Keycodes", <PageIcon />, 149, true],
  ["Unicode character", <LetterIcon letter="UT" bg="#602058" fg="#fff" size={11} />, 150, true],
  ["Midi to Sheet music", <LetterIcon letter="8" bg="#7fba00" fg="#fff" round />, 150, true],
  ["EV3DEV", <FolderIcon />, 91],
  ["Typing Test", <LetterIcon letter="T" bg="#f2ecec" fg="#111" size={12} width={10} />, 110],
];

/* ---------- App ---------- */

export default function App() {
  return (
    <Desktop>
      <GlobalStyle />
      <MenuBar>
        <WindowTitle>OpenJSCAD.org - Google Chrome</WindowTitle>
        <Indicators>
          <Indicator $w={32}>
            <svg width="18" height="18" viewBox="0 0 18 18"><circle cx="9" cy="9" r="9" fill="#e0dcd6" /><FaSteamSymbol size={15} x="1.500" y="1.500" color="#45433d" /></svg>
          </Indicator>
          <Indicator $w={32}><ChromeLogo size={20} /></Indicator>
          <Indicator $w={22}><FaBluetoothB size={16} /></Indicator>
          <Indicator $w={104}><CpuGraph /></Indicator>
          <Indicator $w={36}>
            <svg width="18" height="18" viewBox="0 0 18 18" fill="currentColor"><path d="M5 1l5 5H7v9H4V6H0zM13 17l5-5h-3V5h-3v7H8z" /></svg>
          </Indicator>
          <Indicator $w={28}><Keyboard>En</Keyboard></Indicator>
          <Indicator $w={24}><FaBluetoothB size={16} /></Indicator>
          <Indicator $w={30}>
            <svg width="20" height="16" viewBox="0 0 20 16" fill="currentColor"><path d="M1 5h3l4-4v14l-4-4H1z" /><path d="M10 5q2 3 0 6M13 3q3 5 0 10" stroke="currentColor" strokeWidth="1.500" fill="none" /><path d="M16 1q4 7 0 14" stroke="#8a877e" strokeWidth="1.500" fill="none" /></svg>
          </Indicator>
          <Indicator $w={76}>8:46 AM</Indicator>
          <Indicator $w={16}>
            <svg width="16" height="16" viewBox="0 0 16 16" fill="none" stroke="currentColor"><path d="M5.500 4a5 5 0 1 0 5 0" strokeWidth="2" /><path d="M8 1v6" strokeWidth="2" /><path d="M3 3l1.500 1.500M13 3l-1.500 1.500M0 8.500h3M13 8.500h3M2.500 14l2-2M13.500 14l-2-2M8 14v2" strokeWidth="2" /></svg>
          </Indicator>
        </Indicators>
      </MenuBar>

      <Work>
        <LauncherFrame aria-label="Launcher">
          <LauncherWallpaper />
          <LauncherItems>
            {launcherItems.map((it) => (
              <Tile key={it.name} aria-label={it.name} $bg={it.bg} $running={it.running} $focused={it.focused} $last={it.last}>{it.art}</Tile>
            ))}
          </LauncherItems>
        </LauncherFrame>

        <Browser>
          <TabStrip>
            {tabs.map((t) => (
              <TabBox key={t.title} $z={t.z} $active={t.active}>
                <TabShape viewBox="0 0 205 28">
                  <path d="M0 28 11 2q1-1.500 2-1.500h179q1 0 2 1.500l11 26" fill={t.active ? "#f2f2f2" : "#d2d2d2"} stroke="#999" />
                </TabShape>
                <TabContent>
                  {t.icon}
                  <TabTitle $fade={t.fade}>{t.title}</TabTitle>
                  <IconButton $w={12} aria-label={`Close ${t.title}`}><CloseIcon /></IconButton>
                </TabContent>
              </TabBox>
            ))}
            <NewTab aria-label="New tab">
              <svg width="34" height="20" viewBox="0 0 34 20"><path d="M1 1.500h24q2 0 3 2l5 13q0 1-1 1H8q-1 0-2-2z" fill="#d2d2d2" stroke="#a4a4a4" /></svg>
            </NewTab>
            <UserBadge>Alex</UserBadge>
          </TabStrip>

          <Toolbar>
            <NavButtons>
              <IconButton aria-label="Back"><svg width="16" height="16" viewBox="0 0 16 16" fill="none" stroke="#555" strokeWidth="2"><path d="M15 8H2M8.500 1.500 2 8l6.500 6.500" /></svg></IconButton>
              <IconButton aria-label="Forward"><svg width="16" height="16" viewBox="0 0 16 16" fill="none" stroke="#ccc" strokeWidth="2"><path d="M1 8h13M7.500 1.500 14 8l-6.500 6.500" /></svg></IconButton>
              <IconButton aria-label="Reload page"><svg width="16" height="16" viewBox="0 0 16 16"><path d="M13 4.500A6 6 0 1 0 14 9.500" fill="none" stroke="#555" strokeWidth="2" /><path d="M15 1v6.500H8.500z" fill="#555" /></svg></IconButton>
            </NavButtons>
            <AddressBox>
              <svg width="12" height="14" viewBox="0 0 12 14"><path d="M1.500 5.500h9V13h-9z" fill="#0b8043" /><path d="M3.500 6V4a2.500 2.500 0 0 1 5 0v2" fill="none" stroke="#0b8043" strokeWidth="1.500" /></svg>
              <AddressInput aria-label="Address" defaultValue="https://openjscad.org" />
              <IconButton aria-label="Bookmark this page"><svg width="16" height="16" viewBox="0 0 16 16"><path d="M8 1.500l2 4.600 4.800.4-3.700 3.200 1.200 4.800L8 12l-4.300 2.500 1.200-4.800L1.200 6.500 6 6.100z" fill="none" stroke="#555" strokeWidth="1.400" /></svg></IconButton>
            </AddressBox>
            <ToolbarEnd>
              <IconButton aria-label="Extension"><svg width="12" height="12" viewBox="0 0 12 12"><path d="M11.500 2H1.500v8.500h10" fill="none" stroke="#aaa" strokeWidth="2" /></svg></IconButton>
              <IconButton aria-label="Menu"><svg width="4" height="14" viewBox="0 0 4 14" fill="#555"><circle cx="2" cy="2" r="1.700" /><circle cx="2" cy="7" r="1.700" /><circle cx="2" cy="12" r="1.700" /></svg></IconButton>
            </ToolbarEnd>
          </Toolbar>

          <Bookmarks aria-label="Bookmarks">
            {bookmarks.map(([label, icon, w, fade]) => (
              <Bookmark key={label} href="#" $w={w}>{icon}<BookmarkLabel $fade={fade}>{label}</BookmarkLabel></Bookmark>
            ))}
            <Overflow aria-label="More bookmarks">»</Overflow>
          </Bookmarks>

          <Page>
            <Scene />
            <Overlay>
              <Brand href="#">
                <Cube size={34} />
                <span>Open<em>JSCAD</em>.org</span>
                <sup>ALPHA</sup>
              </Brand>

              <Parameters onSubmit={(e) => e.preventDefault()}>
                <ModeRow>
                  <label htmlFor="mode">Mode</label>
                  <SelectBox>
                    <Select id="mode" $focused defaultValue="2D"><option>2D</option><option>3D</option></Select>
                    <DownTriangle />
                  </SelectBox>
                </ModeRow>
                <Row>
                  <PushButton>Update</PushButton>
                  <CheckLabel $ml={14} $size={14}><Check type="checkbox" defaultChecked />Instant Update</CheckLabel>
                </Row>
              </Parameters>

              <StatusRow>
                <Status>Ready.</Status>
                <SelectBox>
                  <Select aria-label="Format" defaultValue="DXF"><option>DXF</option></Select>
                  <DownTriangle />
                </SelectBox>
                <PushButton>Generate DXF</PushButton>
              </StatusRow>

              <FileBox>
                <FileName>Current file: rollerwheel2.jscad</FileName>
                <PushButton>Reload</PushButton>
                <CheckLabel $ml={4} $size={16}>Auto Reload<Check type="checkbox" defaultChecked /></CheckLabel>
              </FileBox>

              <Footer>
                OpenJSCAD.org 0.5.2 (2016/10/01), MIT License, get your own copy/clone/fork from <a href="#">GitHub: OpenJSCAD</a>
              </Footer>
            </Overlay>
          </Page>
        </Browser>
      </Work>
    </Desktop>
  );
}
